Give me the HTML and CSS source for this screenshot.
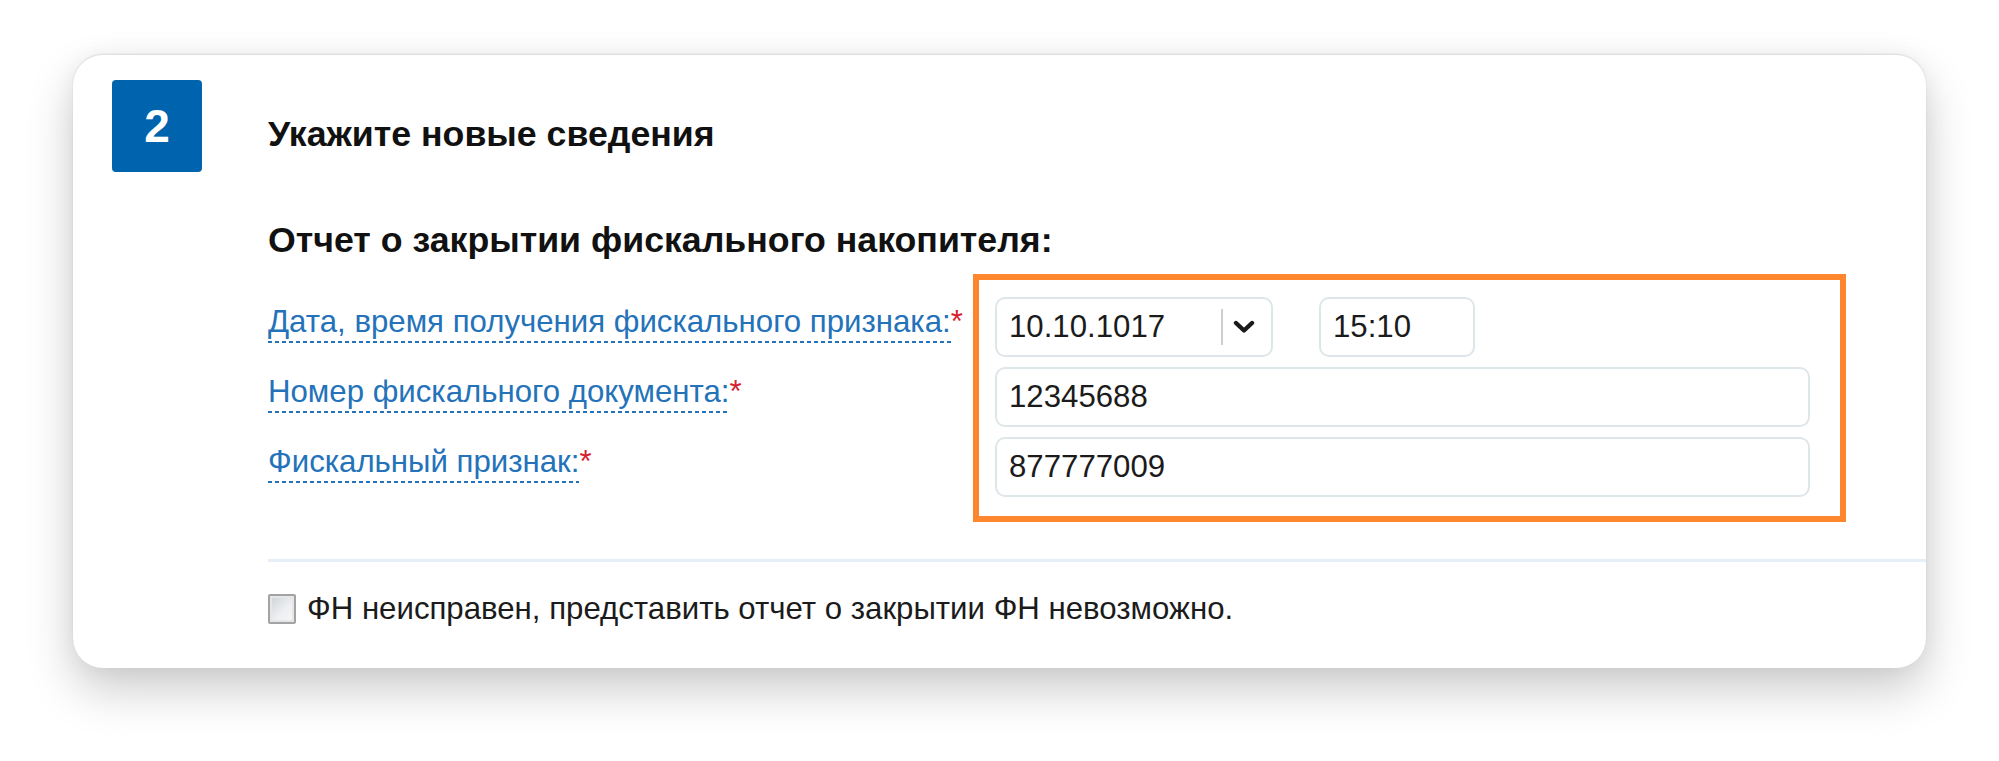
FILE: index.html
```html
<!DOCTYPE html>
<html lang="ru">
<head>
<meta charset="utf-8">
<title>Укажите новые сведения</title>
<link rel="stylesheet" href="styles.css">
</head>
<body>
<div class="page">
  <section class="card">
    <div class="step">2</div>
    <div class="content">
      <h2 class="title">Укажите новые сведения</h2>
      <h3 class="subtitle">Отчет о закрытии фискального накопителя:</h3>
      <div class="form">
        <div class="labels">
          <div class="label-row"><span class="lbl">Дата, время получения фискального признака:</span><span class="req">*</span></div>
          <div class="label-row"><span class="lbl">Номер фискального документа:</span><span class="req">*</span></div>
          <div class="label-row"><span class="lbl">Фискальный признак:</span><span class="req">*</span></div>
        </div>
        <div class="fields">
          <div class="field-row">
            <div class="input select">
              <span class="val">10.10.1017</span>
              <span class="sep"></span>
              <svg class="chev" width="22" height="14" viewBox="0 0 22 14"><polyline points="3,3 11,10.5 19,3" fill="none" stroke="#1a1a1a" stroke-width="4.4" stroke-linecap="round" stroke-linejoin="round"/></svg>
            </div>
            <div class="input time">15:10</div>
          </div>
          <div class="input wide">12345688</div>
          <div class="input wide">877777009</div>
        </div>
      </div>
      <div class="divider"></div>
      <label class="check"><span class="box"></span><span class="check-text">ФН неисправен, представить отчет о закрытии ФН невозможно.</span></label>
    </div>
  </section>
</div>
</body>
</html>
```
FILE: styles.css
```css
* { box-sizing: border-box; }
html, body { margin: 0; padding: 0; background: #ffffff; }
body { font-family: "Liberation Sans", Arial, sans-serif; color: #1a1a1a; }

.page {
  padding: 55px 0 0 73px;
  height: 761px;
  overflow: hidden;
}

.card {
  width: 1853px;
  height: 613px;
  background: #fff;
  border-radius: 30px;
  box-shadow: 0 22px 48px rgba(0,0,0,0.20), 0 -1px 2px rgba(0,0,0,0.10), 0 0 24px rgba(0,0,0,0.05);
  display: flex;
  gap: 66px;
  padding: 25px 0 0 39px;
}

.step {
  flex: 0 0 90px;
  height: 92px;
  background: #0063ad;
  border-radius: 4px;
  color: #fff;
  font-weight: bold;
  font-size: 46px;
  display: flex;
  align-items: center;
  justify-content: center;
}

.content {
  flex: 1;
  display: flex;
  flex-direction: column;
}

.title {
  margin: 34px 0 0 0;
  font-size: 35.7px;
  line-height: 40px;
  font-weight: bold;
  color: #111;
}

.subtitle {
  margin: 68px 0 0 0;
  font-size: 35.7px;
  line-height: 36px;
  font-weight: bold;
  color: #111;
}

.form {
  display: flex;
  margin-top: 16px;
}

.labels {
  width: 705px;
  padding-top: 30px;
  display: flex;
  flex-direction: column;
}

.label-row {
  height: 70px;
  font-size: 31.2px;
  line-height: 36px;
  white-space: nowrap;
}

.lbl {
  color: #2472b9;
  padding-bottom: 4px;
  background: repeating-linear-gradient(90deg, #2472b9 0 4px, transparent 4px 7px) left bottom / 100% 2px no-repeat;
}

.req { color: #d6202f; }

.fields {
  width: 873px;
  border: 6px solid #fd862e;
  padding: 17px 30px 19px 16px;
  display: flex;
  flex-direction: column;
  gap: 10px;
}

.field-row {
  display: flex;
  gap: 46px;
}

.input {
  height: 60px;
  border: 2px solid #dfe6ea;
  border-radius: 10px;
  display: flex;
  align-items: center;
  padding-left: 12px;
  font-size: 31.2px;
  color: #1b1b1b;
}

.select { width: 278px; }
.select .val { width: 212px; flex: 0 0 212px; }
.sep {
  flex: 0 0 2px;
  height: 36px;
  background: #cfcfcf;
}
.chev { margin-left: 10px; }

.time { width: 156px; }
.wide { width: 815px; }

.divider {
  margin-top: 37px;
  height: 3px;
  background: #e6eef7;
}

.check {
  margin-top: 29px;
  display: flex;
  align-items: center;
  gap: 11px;
  font-size: 31.2px;
  line-height: 36px;
  color: #1b1b1b;
}

.box {
  width: 28px;
  height: 30px;
  border: 2px solid #a3a3a3;
  border-radius: 2px;
  background: linear-gradient(135deg, #cfd2d6 0%, #eef0f2 60%, #f6f6f6 100%);
  box-shadow: inset 0 0 0 2px #e4e6e8;
}
```
